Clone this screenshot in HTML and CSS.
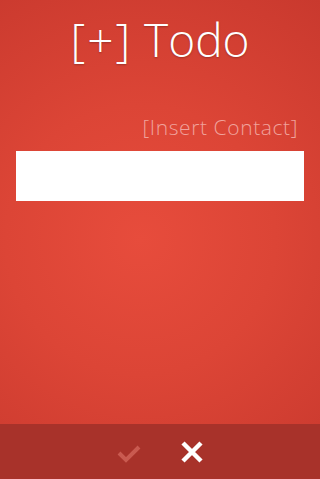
FILE: index.html
```html
<!DOCTYPE html>
<html>
<head>
<meta charset="utf-8">
<link rel="stylesheet" href="styles.css">
</head>
<body>
<div class="app">
  <h1 class="title"><span class="plus">[+]</span> Todo</h1>
  <div class="label">[Insert Contact]</div>
  <input class="field" type="text">
  <div class="spacer"></div>
  <div class="footer">
    <svg class="icon ok" width="26" height="22" viewBox="0 0 26 22"><path d="M3 11 L10 18 L23 5" fill="none" stroke="#c95a50" stroke-width="4"/></svg>
    <svg class="icon cancel" width="24" height="24" viewBox="0 0 24 24"><path d="M3 3 L21 21 M21 3 L3 21" fill="none" stroke="#fff" stroke-width="4.5"/></svg>
  </div>
</div>
</body>
</html>
```
FILE: styles.css
```css
html, body { margin: 0; padding: 0; }
body { width: 320px; height: 479px; overflow: hidden; font-family: "Open Sans", sans-serif; }
.app {
  height: 479px;
  display: flex;
  flex-direction: column;
  background: radial-gradient(circle at 44% 50%, #e74c3c 0%, #dc4536 45%, #c9392e 100%);
}
.title {
  margin: 0;
  padding-top: 8px;
  text-align: center;
  font-weight: 300;
  font-size: 46px;
  line-height: 62px;
  color: #fff;
  text-shadow: 0 1px 2px rgba(0,0,0,0.25);
}
.plus { letter-spacing: 2px; }
.label {
  margin-top: 44px;
  padding-right: 22px;
  text-align: right;
  font-weight: 300;
  font-size: 21px;
  letter-spacing: 0.6px;
  line-height: 26px;
  color: #f0a29c;
}
.field {
  margin: 11px 16px 0;
  height: 50px;
  box-sizing: border-box;
  border: 0;
  background: #fff;
  outline: none;
}
.spacer { flex: 1; }
.footer {
  height: 55px;
  background: #a8322a;
  display: flex;
  align-items: center;
  justify-content: center;
  gap: 38px;
}
.icon { display: block; }
.ok { margin-top: 2px; }
```
